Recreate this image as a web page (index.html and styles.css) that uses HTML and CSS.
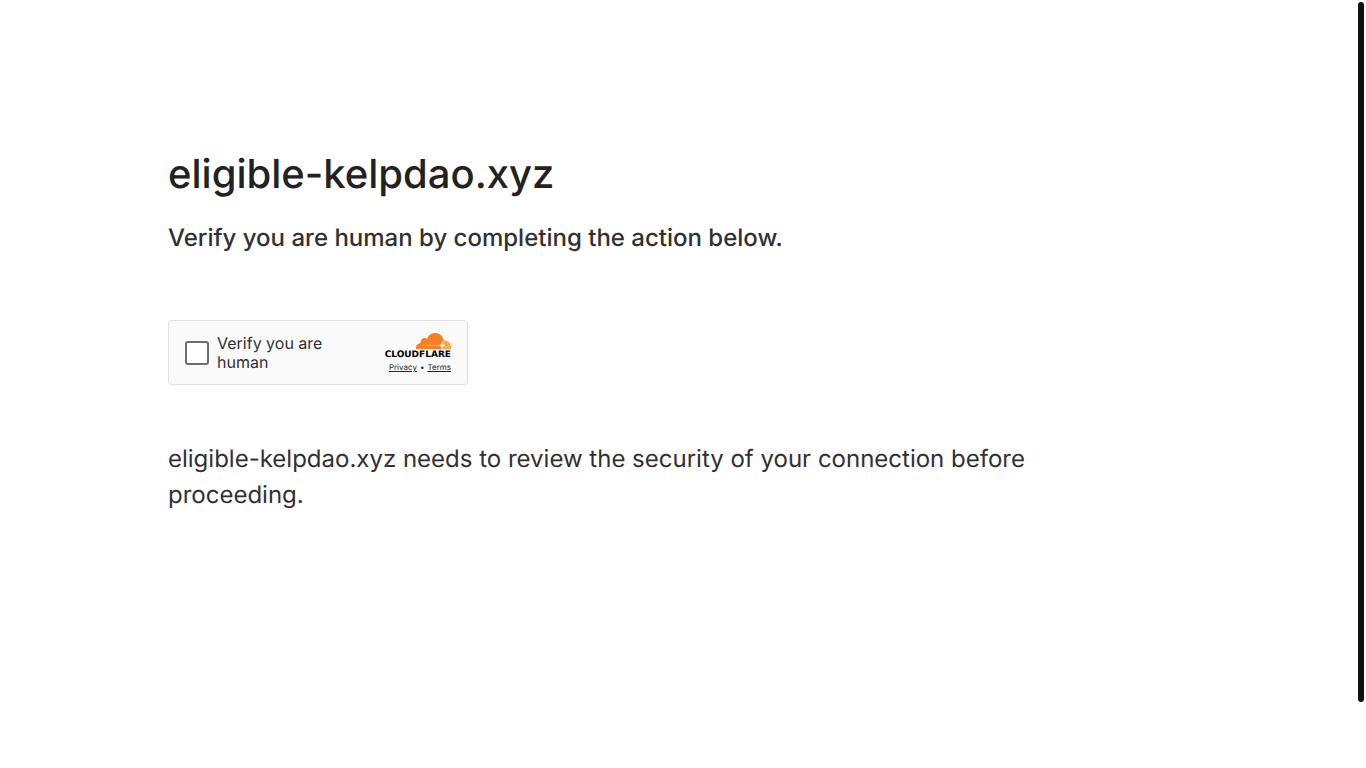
FILE: index.html
```html
<!DOCTYPE html>
<html lang="en">
<head>
<meta charset="utf-8">
<title>Just a moment...</title>
<link rel="stylesheet" href="styles.css">
</head>
<body>
<main class="main">
  <h1 class="host">eligible-kelpdao.xyz</h1>
  <h2 class="lead">Verify you are human by completing the action below.</h2>
  <div class="widget">
    <label class="check"><input class="box" type="checkbox"><span class="check-text">Verify you are human</span></label>
    <div class="brand">
      <svg class="cloud" viewBox="0 0 35 16" aria-hidden="true">
        <path fill="#f6821f" d="M0 16V14.500C0 12 2 10.200 4.600 10C4.300 7 6.200 4.900 8.600 4.900C9.600 4.900 10.400 5.300 11.100 5.900C12.200 2.300 15.300 0 19 0C23.600 0 26.900 3 27.500 7.200L26.600 8.700L25.800 11.400L24 12.500L25.700 13.500L24.800 16Z"/>
        <path fill="#fbad41" d="M27.500 7.300C31.600 6.900 35 10 35 14.300V16H25.200L26.400 13.600L29.300 12.500L26.500 11.200Z"/>
        <path fill="none" stroke="#fbc48f" stroke-width=".8" d="M9 12.400H24"/>
        <path fill="#fff" d="M25.700 9.700L26.700 11.500L29.300 12.500L26.700 13.400L25.700 15.400L24.800 13.400L22.500 12.500L24.800 11.500Z"/>
      </svg>
      <span class="wordmark">CLOUDFLARE</span>
      <nav class="links"><a href="#">Privacy</a><span class="dot">•</span><a href="#">Terms</a></nav>
    </div>
  </div>
  <p class="body-text">eligible-kelpdao.xyz needs to review the security of your connection before proceeding.</p>
</main>
<div class="scroll-thumb"></div>
</body>
</html>
```

FILE: styles.css
```css
* { box-sizing: border-box; margin: 0; padding: 0; }
body { background: #fff; color: #313131; font-family: Inter, sans-serif; text-rendering: geometricPrecision; }
.main { width: 100%; max-width: 1078px; margin: 0 auto; padding: 144px 24px 0; }
.host { font-size: 40px; line-height: 60px; font-weight: 500; color: #222; }
.lead { font-size: 24px; line-height: 36px; font-weight: 500; margin-top: 16px; }
.widget { display: flex; align-items: center; justify-content: space-between; width: 300px; max-width: 100%; min-height: 65px; margin-top: 64px; padding: 0 16px; background: #fafafa; border: 1px solid #e0e0e0; border-radius: 4px; }
.check { display: flex; align-items: center; gap: 8px; width: 152px; font-size: 16px; line-height: 19px; }
.box { appearance: none; flex: none; width: 24px; height: 24px; border: 2px solid #6d6d6d; border-radius: 3px; background: #fff; }
.brand { display: flex; flex-direction: column; align-items: flex-end; }
.cloud { width: 35px; height: 16px; }
.wordmark { margin-top: 1px; color: #000; font-family: "DejaVu Sans", sans-serif; font-size: 9px; line-height: 10px; font-weight: 700; }
.links { display: flex; gap: 3px; font-size: 8px; line-height: 10px; margin-top: 2px; }
.links a { color: #232323; }
.body-text { max-width: 960px; font-size: 24px; line-height: 36px; font-weight: 400; margin-top: 56px; }
.scroll-thumb { position: fixed; top: 2px; right: 2px; width: 6px; height: 700px; border-radius: 3px; background: #111; }
```
